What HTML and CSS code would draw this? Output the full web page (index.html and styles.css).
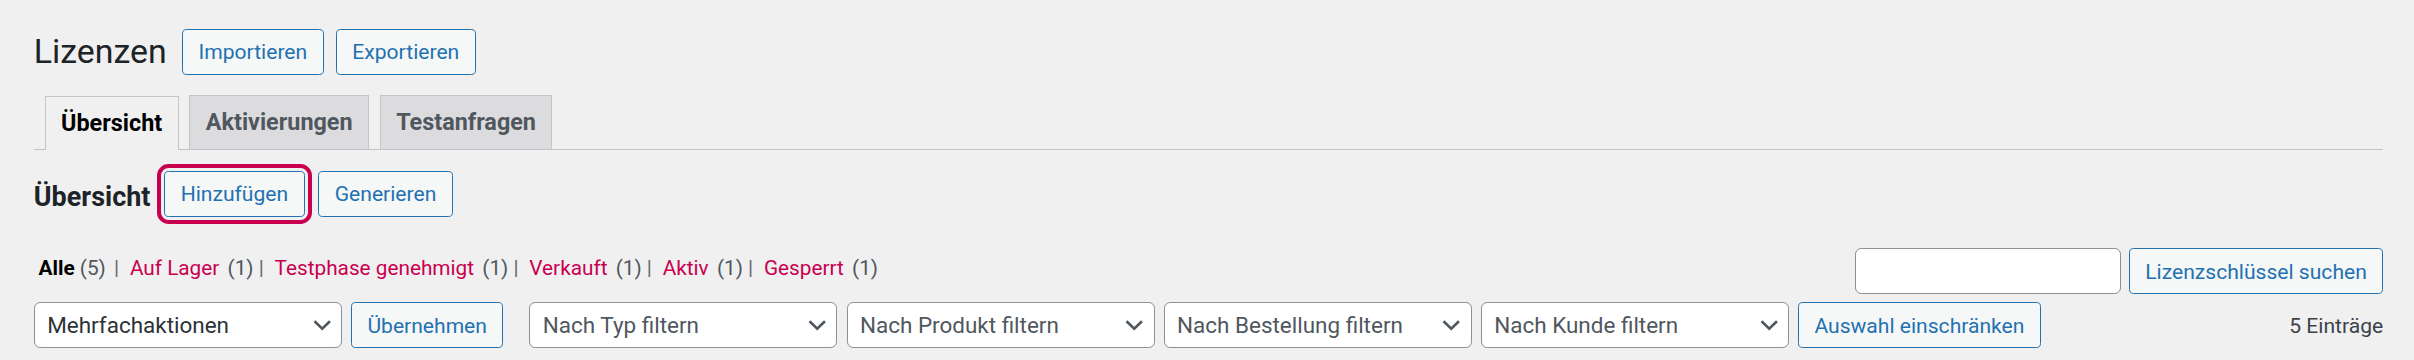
FILE: index.html
```html
<!DOCTYPE html>
<html lang="de">
<head>
    <meta charset="UTF-8">
    <meta name="viewport" content="width=device-width, initial-scale=1.0">
    <title>Lizenzen</title>
    <link rel="stylesheet" href="styles.css">
</head>
<body>

    <div class="wrap">

        <!-- Page title -->
        <div class="page-head">
            <h1>Lizenzen</h1>
            <a href="#" class="button">Importieren</a>
            <a href="#" class="button">Exportieren</a>
        </div>

        <!-- Tabs -->
        <nav class="nav-tabs">
            <a href="#" class="nav-tab active">Übersicht</a>
            <a href="#" class="nav-tab">Aktivierungen</a>
            <a href="#" class="nav-tab">Testanfragen</a>
        </nav>

        <!-- Section title -->
        <div class="section-head">
            <h2>Übersicht</h2>
            <a href="#" class="button highlighted">Hinzufügen</a>
            <a href="#" class="button">Generieren</a>
        </div>

        <!-- Status links + search -->
        <div class="list-top">
            <ul class="subsubsub">
                <li><a href="#" class="current">Alle <span class="count">(5)</span></a> |</li>
                <li><a href="#">Auf Lager</a> <span class="count">(1)</span> |</li>
                <li><a href="#">Testphase genehmigt</a> <span class="count">(1)</span> |</li>
                <li><a href="#">Verkauft</a> <span class="count">(1)</span> |</li>
                <li><a href="#">Aktiv</a> <span class="count">(1)</span> |</li>
                <li><a href="#">Gesperrt</a> <span class="count">(1)</span></li>
            </ul>
            <form class="search-box" onsubmit="return false">
                <input type="search" class="search-input">
                <button type="submit" class="button">Lizenzschlüssel suchen</button>
            </form>
        </div>

        <!-- Table navigation -->
        <div class="tablenav">
            <div class="actions bulk">
                <span class="select-wrap">
                    <select class="strong">
                        <option>Mehrfachaktionen</option>
                        <option>Löschen</option>
                    </select>
                    <svg class="select-arrow" viewBox="0 0 12 8" width="12" height="8"><polyline points="1,1.5 6,6.3 11,1.5" fill="none" stroke="currentColor" stroke-width="1.7"/></svg>
                </span>
                <button class="button">Übernehmen</button>
            </div>
            <div class="actions">
                <span class="select-wrap">
                    <select><option>Nach Typ filtern</option></select>
                    <svg class="select-arrow" viewBox="0 0 12 8" width="12" height="8"><polyline points="1,1.5 6,6.3 11,1.5" fill="none" stroke="currentColor" stroke-width="1.7"/></svg>
                </span>
                <span class="select-wrap">
                    <select><option>Nach Produkt filtern</option></select>
                    <svg class="select-arrow" viewBox="0 0 12 8" width="12" height="8"><polyline points="1,1.5 6,6.3 11,1.5" fill="none" stroke="currentColor" stroke-width="1.7"/></svg>
                </span>
                <span class="select-wrap">
                    <select><option>Nach Bestellung filtern</option></select>
                    <svg class="select-arrow" viewBox="0 0 12 8" width="12" height="8"><polyline points="1,1.5 6,6.3 11,1.5" fill="none" stroke="currentColor" stroke-width="1.7"/></svg>
                </span>
                <span class="select-wrap">
                    <select><option>Nach Kunde filtern</option></select>
                    <svg class="select-arrow" viewBox="0 0 12 8" width="12" height="8"><polyline points="1,1.5 6,6.3 11,1.5" fill="none" stroke="currentColor" stroke-width="1.7"/></svg>
                </span>
                <button class="button">Auswahl einschränken</button>
            </div>
            <div class="displaying-num">5 Einträge</div>
        </div>

    </div>

</body>
</html>
```

FILE: styles.css
```css
* {
    box-sizing: border-box;
}

/* screenshot was taken at ~154% browser zoom */
html {
    zoom: 1.5395;
}

body {
    margin: 0;
    background-color: #f0f0f1;
    color: #3c434a;
    font-family: Roboto, "Liberation Sans", sans-serif;
    font-size: 13.7px;
}

.wrap {
    margin: 10px 20px 0 22px;
}

/* Buttons */
.button {
    display: inline-block;
    min-height: 30px;
    padding: 0 10px;
    border: 1px solid #2271b1;
    border-radius: 3px;
    background: #f6f7f7;
    color: #2271b1;
    font-family: inherit;
    font-size: 13.7px;
    line-height: 28px;
    text-decoration: none;
    white-space: nowrap;
    cursor: pointer;
}

.button.highlighted {
    outline: 3px solid #c8004f;
    outline-offset: 2.5px;
}

/* Page title */
.page-head {
    display: flex;
    align-items: center;
    gap: 8px;
    padding: 9px 0 4px;
}

.page-head h1 {
    margin: 0 2px 0 0;
    font-size: 22px;
    font-weight: 400;
    line-height: 30px;
    color: #1d2327;
}

/* Tabs */
.nav-tabs {
    display: flex;
    align-items: flex-end;
    gap: 7px;
    padding: 9px 0 0 7px;
    border-bottom: 1px solid #c3c4c7;
}

.nav-tab {
    padding: 5px 10px;
    border: 1px solid #c3c4c7;
    border-bottom: none;
    background: #dcdcde;
    color: #50575e;
    font-size: 15.2px;
    font-weight: 700;
    line-height: 24px;
    text-decoration: none;
}

.nav-tab.active {
    background: #f0f0f1;
    color: #000;
    border-bottom: 1px solid #f0f0f1;
    margin-bottom: -1px;
}

/* Section title */
.section-head {
    display: flex;
    align-items: center;
    gap: 9px;
    margin-top: 14px;
}

.section-head h2 {
    margin: 0;
    padding-top: 4px;
    font-size: 17.5px;
    font-weight: 700;
    line-height: 24px;
    color: #1d2327;
}

/* Status links + search */
.list-top {
    display: flex;
    justify-content: space-between;
    align-items: flex-start;
    margin-top: 20px;
}

.subsubsub {
    display: flex;
    gap: 5px;
    margin: 0;
    padding: 0 0 0 1px;
    list-style: none;
    font-size: 13.5px;
    line-height: 26px;
    color: #646970;
}

.subsubsub li {
    white-space: nowrap;
}

.subsubsub a {
    color: #c8004f;
    text-decoration: none;
    padding: 0 2px;
}

.subsubsub a.current {
    color: #000;
    font-weight: 700;
}

.subsubsub .count {
    color: #50575e;
    font-weight: 400;
}

.search-box {
    display: flex;
    gap: 5px;
    margin: 0;
}

.search-input {
    width: 173px;
    height: 30px;
    margin: 0;
    padding: 0 8px;
    border: 1px solid #8c8f94;
    border-radius: 4px;
    background: #fff;
    font-family: inherit;
    font-size: 14px;
}

/* Table navigation */
.tablenav {
    display: flex;
    align-items: center;
    margin-top: 5px;
}

.actions {
    display: flex;
    gap: 6px;
}

.actions.bulk {
    margin-right: 17px;
}

.select-wrap {
    position: relative;
    display: block;
    color: #50575e;
}

.select-wrap select {
    display: block;
    width: 200px;
    height: 30px;
    margin: 0;
    padding: 0 24px 0 8px;
    border: 1px solid #8c8f94;
    border-radius: 4px;
    background: #fff;
    color: #50575e;
    font-family: Roboto, "Liberation Sans", sans-serif;
    font-size: 14.6px;
    -webkit-appearance: none;
    appearance: none;
}

.select-wrap select.strong {
    color: #2c3338;
}

.select-arrow {
    position: absolute;
    top: 11px;
    right: 7px;
    pointer-events: none;
}

.displaying-num {
    margin-left: auto;
    color: #3c434a;
}
```
